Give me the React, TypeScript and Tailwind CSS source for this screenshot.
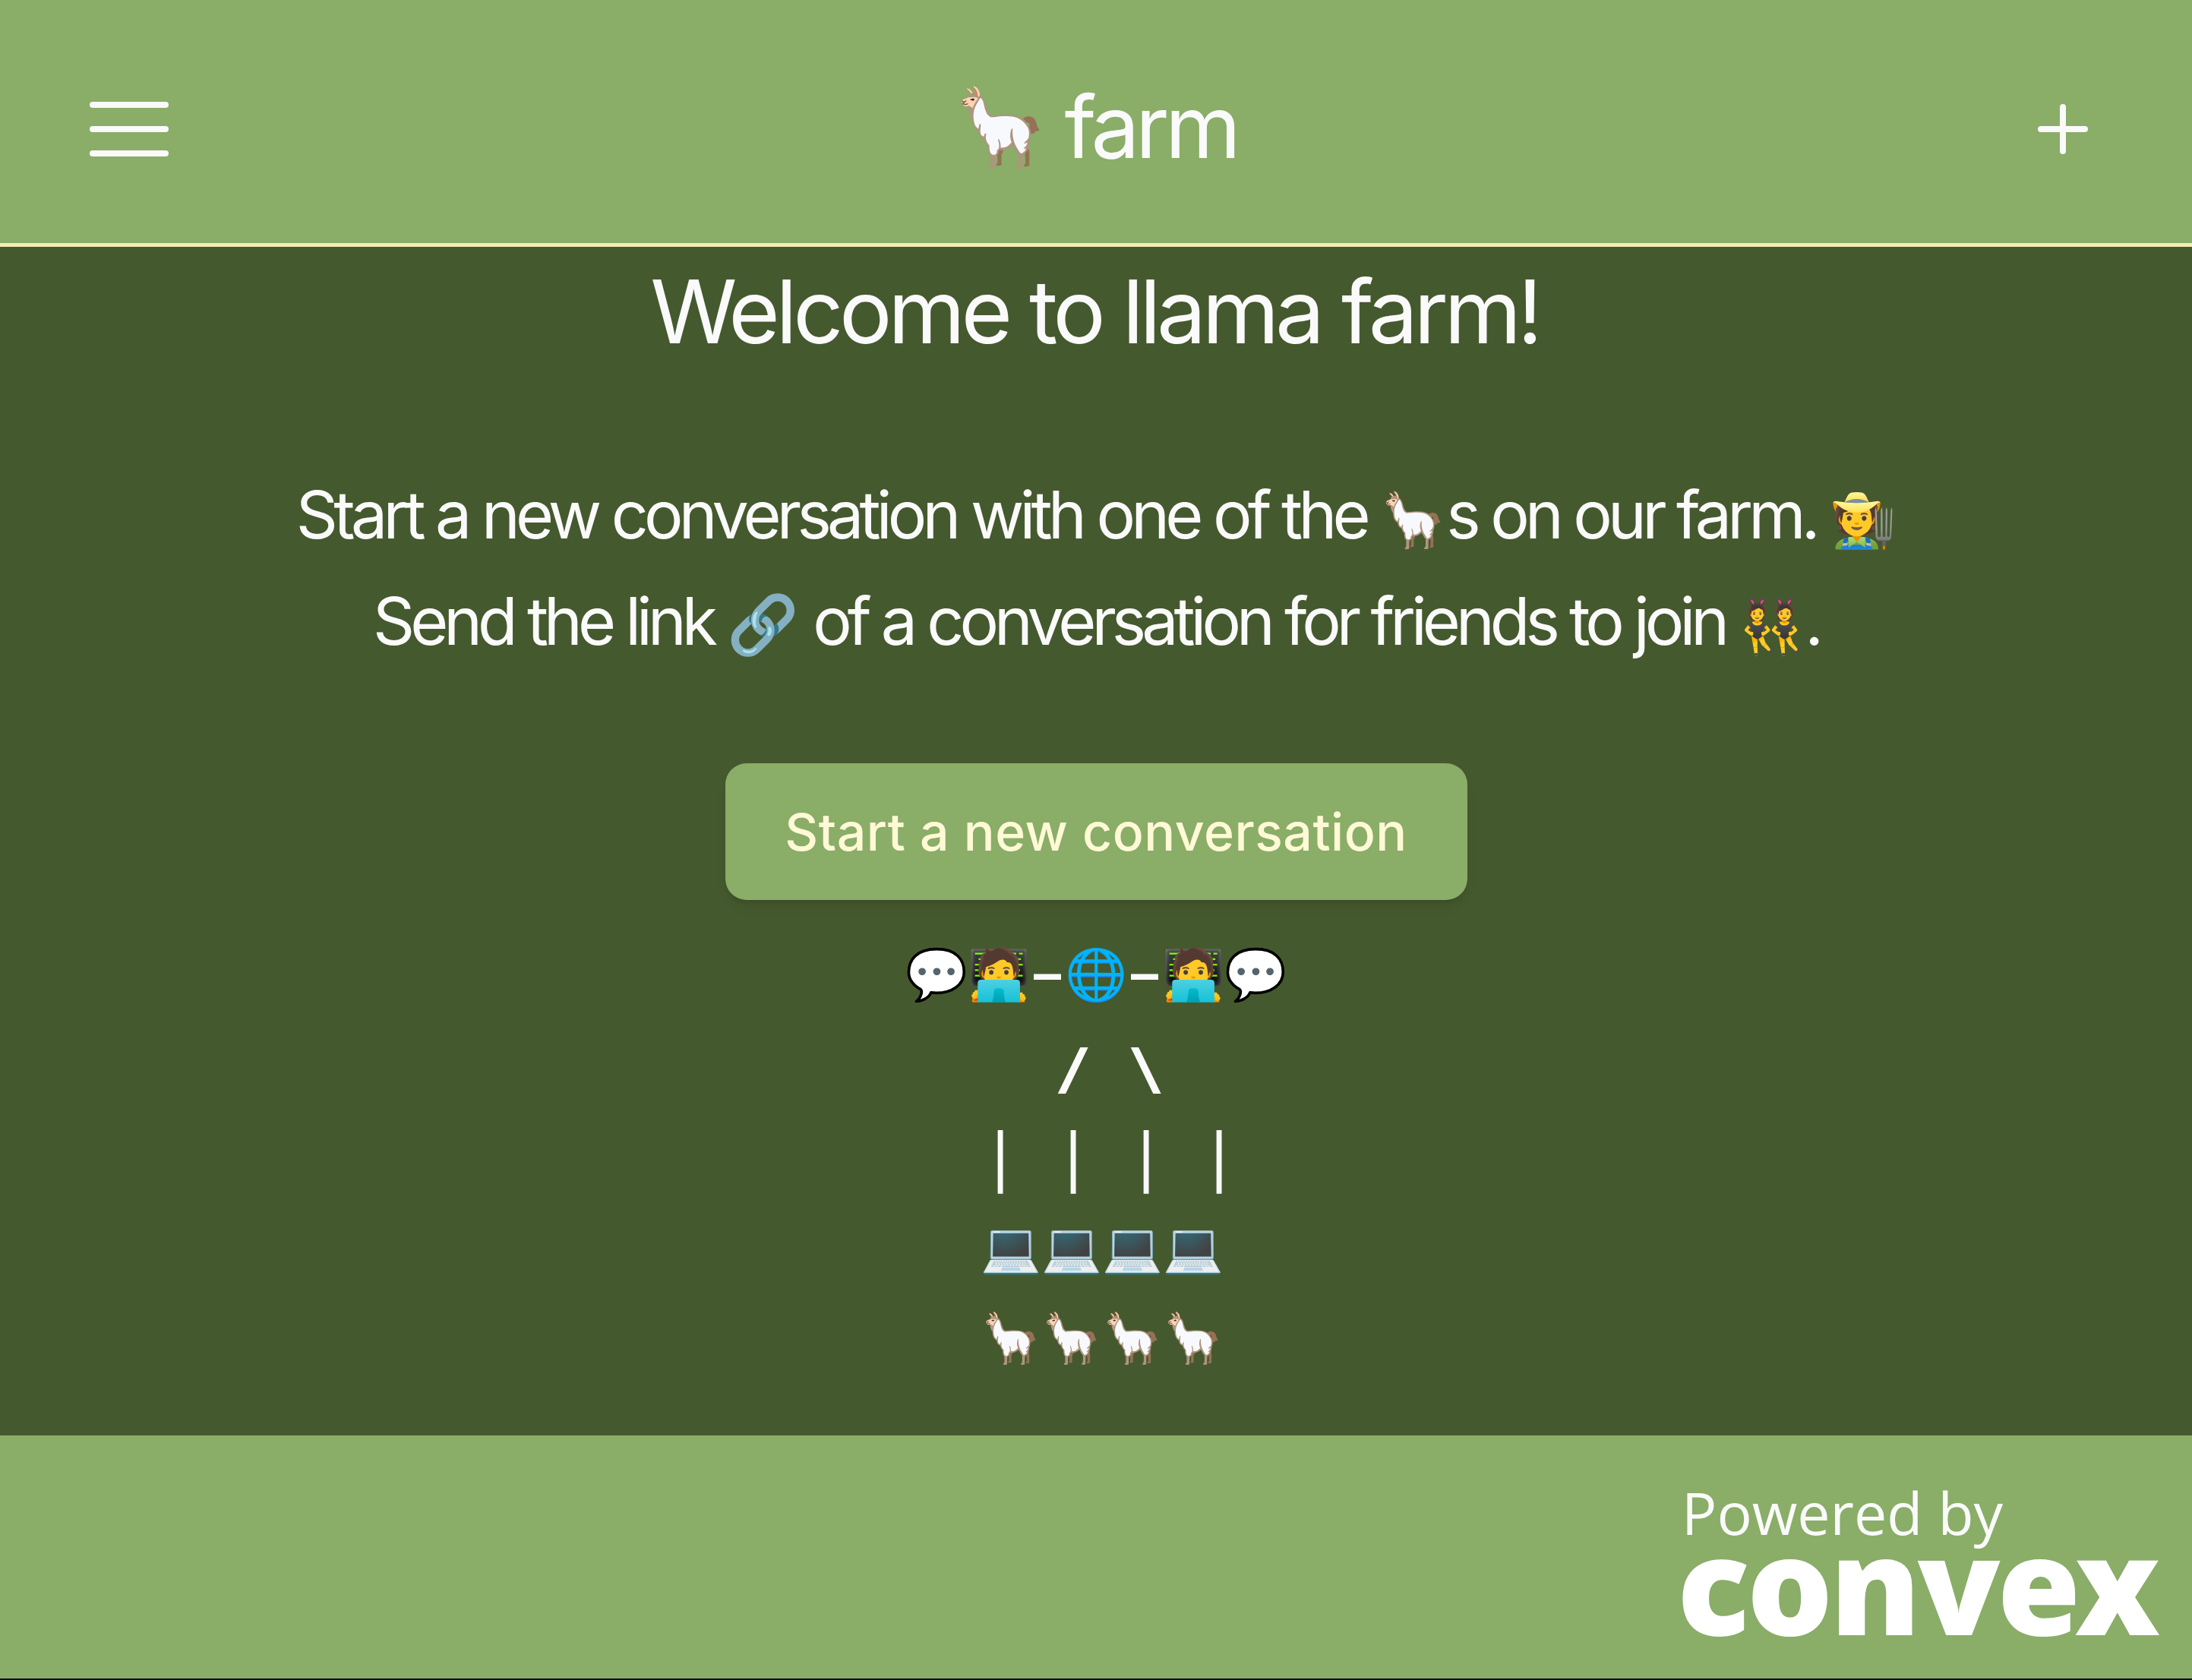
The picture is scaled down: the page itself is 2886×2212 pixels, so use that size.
function Emoji({ children, className }: { children: string; className: string }) {
  return <span className={`tracking-normal leading-none ${className}`}>{children}</span>;
}

function Cells({ items, className, glyphClass }: { items: string[]; className: string; glyphClass?: string }) {
  return (
    <div className={`flex pl-[36px] text-[70px] ${className}`}>
      {items.map((c, i) => (
        <span key={i} className="w-[96px] text-center">
          <span className={`inline-block ${glyphClass ?? ""}`}>{c}</span>
        </span>
      ))}
    </div>
  );
}

function EmojiRow({ glyph, className }: { glyph: string; className: string }) {
  return (
    <div className={`flex pl-[16px] ${className}`}>
      {[0, 1, 2, 3].map((i) => (
        <span key={i} className="w-[80px] text-center">{glyph}</span>
      ))}
    </div>
  );
}

export default function App() {
  return (
    <div className="w-[2886px] h-[2212px] flex flex-col bg-[#45592e] font-['Inter',sans-serif] text-[#fafafa]">
      <header className="h-[325px] shrink-0 bg-[#8aad68] border-b-[5px] border-[#f2eeb3] grid grid-cols-[1fr_auto_1fr] items-center pt-[20px] pl-[118px] pr-[137px]">
        <svg width="104" height="72" viewBox="0 0 104 72" fill="none" stroke="#fafafa" strokeWidth="8" strokeLinecap="round">
          <path d="M4 4H100M4 36H100M4 68H100" />
        </svg>
        <div className="flex items-center ml-[8px] pb-[8px]">
          <Emoji className="text-[100px] ml-[8px]">🦙</Emoji>
          <span className="text-[114px] tracking-[-5.5px] ml-[22px]">farm</span>
        </div>
        <svg className="justify-self-end" width="66" height="66" viewBox="0 0 66 66" fill="none" stroke="#fafafa" strokeWidth="8" strokeLinecap="round">
          <path d="M33 4V62M4 33H62" />
        </svg>
      </header>

      <main className="flex-1 flex flex-col items-center">
        <h1 className="pt-[15px] mb-[128px] mr-[4px] text-[116px] leading-[140px] tracking-[-5.4px]">Welcome to llama farm!</h1>
        <p className="h-[140px] text-[86px] leading-[140px] tracking-[-5.8px] whitespace-pre">
          Start a new conversation with one of the <Emoji className="text-[70px]">🦙</Emoji>s on our farm. <Emoji className="text-[70px]">🧑‍🌾</Emoji>
        </p>
        <p className="h-[140px] text-[86px] leading-[140px] tracking-[-6px] whitespace-pre">
          Send the link <Emoji className="text-[76px]">🔗</Emoji> of a conversation for friends to join <Emoji className="text-[70px]">👯</Emoji>.
        </p>
        <button className="mt-[117px] w-[977px] h-[180px] rounded-[28px] bg-[#8aad68] text-[68px] font-medium tracking-[0.5px] text-[#fff9d6] shadow-lg">
          Start a new conversation
        </button>
        <div className="mt-[37px] flex flex-col items-center text-[64px]">
          <div className="flex items-center h-[120px] leading-[120px] text-[66px]">
            <span>💬🧑‍💻</span>
            <span className="w-[46px] text-center text-[72px] font-semibold">–</span>
            <span>🌐</span>
            <span className="w-[46px] text-center text-[72px] font-semibold">–</span>
            <span>🧑‍💻💬</span>
          </div>
          <Cells items={["/", "\\"]} className="h-[130px] leading-[130px]" glyphClass="scale-x-[1.8]" />
          <Cells items={["|", "|", "|", "|"]} className="h-[116px] leading-[116px] font-medium" />
          <EmojiRow glyph="💻" className="h-[108px] leading-[108px]" />
          <EmojiRow glyph="🦙" className="h-[130px] leading-[130px]" />
        </div>
      </main>

      <footer className="h-[322px] shrink-0 bg-[#8aad68] border-b-2 border-[#120a1a] flex justify-end pr-[46px]">
        <div className="flex flex-col items-start pt-[52px]">
          <span className="font-['Open_Sans',sans-serif] text-[77px] leading-[100px] ml-[8px]">Powered by</span>
          <span className="font-['Noto_Sans',sans-serif] font-black text-[178px] leading-[84px] tracking-[-4px] ml-[2px] text-white">convex</span>
        </div>
      </footer>
    </div>
  );
}
